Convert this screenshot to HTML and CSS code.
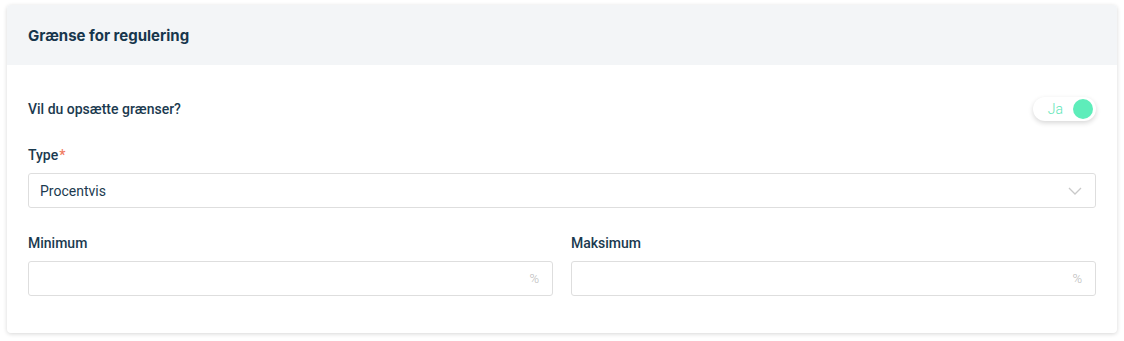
FILE: index.html
```html
<!DOCTYPE html>
<html lang="da">
<head>
    <meta charset="UTF-8">
    <title>Grænse for regulering</title>
    <link rel="stylesheet" href="styles.css">
</head>
<body>
    <div class="card">
        <div class="card-header">Grænse for regulering</div>
        <div class="card-body">
            <div class="question-row">
                <span class="label">Vil du opsætte grænser?</span>
                <div class="toggle">
                    <span class="toggle-text">Ja</span>
                    <span class="toggle-knob"></span>
                </div>
            </div>

            <div class="field">
                <div class="label">Type<span class="required">*</span></div>
                <div class="select">
                    <span>Procentvis</span>
                    <svg width="14" height="8" viewBox="0 0 14 8"><path d="M1 1l6 6 6-6" fill="none" stroke="#c9c9c9" stroke-width="1.3"/></svg>
                </div>
            </div>

            <div class="field-row">
                <div class="field">
                    <div class="label">Minimum</div>
                    <div class="input"><span class="unit">%</span></div>
                </div>
                <div class="field">
                    <div class="label">Maksimum</div>
                    <div class="input"><span class="unit">%</span></div>
                </div>
            </div>
        </div>
    </div>
</body>
</html>
```

FILE: styles.css
```css
body {
    margin: 0;
    padding: 5px 7px;
    background-color: #ffffff;
    font-family: Roboto, "Liberation Sans", sans-serif;
    color: #1b3a4f;
}
.card {
    width: 1110px;
    background-color: #fff;
    border-radius: 4px;
    box-shadow: 0 1px 4px rgba(0, 0, 0, 0.16);
    overflow: hidden;
}
.card-header {
    height: 60px;
    display: flex;
    align-items: center;
    padding: 0 21px;
    background-color: #f3f5f7;
    font-family: Inter, Roboto, sans-serif;
    font-size: 15px;
    font-weight: 700;
    color: #17364c;
}
.card-body {
    padding: 32px 21px 37px;
}
.question-row {
    display: flex;
    justify-content: space-between;
    align-items: center;
    height: 24px;
    margin-bottom: 26px;
}
.label {
    font-size: 14px;
    font-weight: 500;
    line-height: 16px;
    color: #1b3a4f;
}
.required {
    color: #f07a62;
    margin-left: 1px;
}
.toggle {
    width: 63px;
    height: 24px;
    box-sizing: border-box;
    border-radius: 12px;
    background-color: #fff;
    box-shadow: 0 2px 5px rgba(0, 0, 0, 0.16);
    display: flex;
    align-items: center;
    justify-content: flex-end;
    gap: 10px;
    padding-right: 3px;
}
.toggle-text {
    font-size: 14px;
    font-weight: 300;
    color: #5ee6b7;
}
.toggle-knob {
    width: 20px;
    height: 20px;
    border-radius: 50%;
    background-color: #5eedba;
}
.field .label {
    margin-bottom: 10px;
}
.select,
.input {
    height: 35px;
    box-sizing: border-box;
    border: 1px solid #dedede;
    border-radius: 3px;
    display: flex;
    align-items: center;
    padding: 0 13px 0 11px;
    font-size: 14px;
    color: #1b3a4f;
}
.select {
    justify-content: space-between;
    margin-bottom: 27px;
}
.input {
    justify-content: flex-end;
}
.unit {
    font-size: 13px;
    font-weight: 300;
    color: #b9b9b9;
}
.field-row {
    display: grid;
    grid-template-columns: 1fr 1fr;
    gap: 18px;
}
```
